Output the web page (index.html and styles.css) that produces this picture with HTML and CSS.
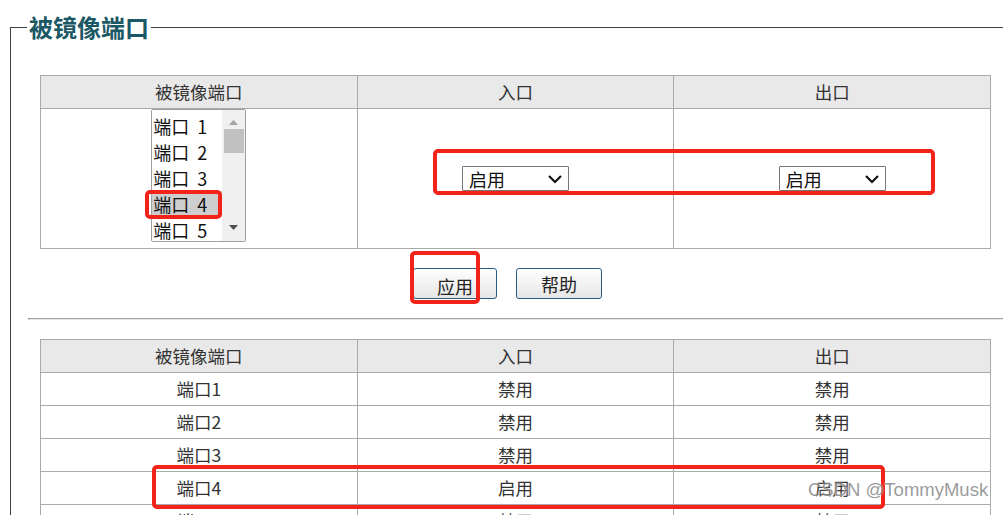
FILE: index.html
```html
<!DOCTYPE html>
<html lang="zh-CN">
<head>
  <meta charset="UTF-8" />
  <meta name="viewport" content="width=device-width, initial-scale=1.0" />
  <title>被镜像端口</title>
  <link rel="stylesheet" href="styles.css">
</head>
<body>
<fieldset class="panel">
  <legend>被镜像端口</legend>

  <table class="grid edit-grid">
    <tr><th>被镜像端口</th><th>入口</th><th>出口</th></tr>
    <tr class="edit-row">
      <td class="port-cell">
        <div class="listbox">
          <div class="options">
            <div class="option">端口 1</div>
            <div class="option">端口 2</div>
            <div class="option">端口 3</div>
            <div class="option selected">端口 4</div>
            <div class="option">端口 5</div>
          </div>
          <div class="scrollbar">
            <svg class="arrow" width="23" height="12" viewBox="0 0 23 12"><polygon points="7,9 16,9 11.5,4" fill="#a3a3a3"/></svg>
            <div class="thumb"></div>
            <svg class="arrow arrow-down" width="23" height="12" viewBox="0 0 23 12"><polygon points="7,3 16,3 11.5,8" fill="#505050"/></svg>
          </div>
        </div>
      </td>
      <td>
        <div class="dropdown"><span>启用</span>
          <svg width="16" height="10" viewBox="0 0 16 10"><polyline points="2,2 8,8 14,2" fill="none" stroke="#111" stroke-width="2.2"/></svg>
        </div>
      </td>
      <td>
        <div class="dropdown"><span>启用</span>
          <svg width="16" height="10" viewBox="0 0 16 10"><polyline points="2,2 8,8 14,2" fill="none" stroke="#111" stroke-width="2.2"/></svg>
        </div>
      </td>
    </tr>
  </table>

  <div class="actions">
    <button class="btn btn-apply">应用</button>
    <button class="btn btn-help">帮助</button>
  </div>

  <hr class="divider">

  <table class="grid list-grid">
    <tr><th>被镜像端口</th><th>入口</th><th>出口</th></tr>
    <tr><td>端口1</td><td>禁用</td><td>禁用</td></tr>
    <tr><td>端口2</td><td>禁用</td><td>禁用</td></tr>
    <tr><td>端口3</td><td>禁用</td><td>禁用</td></tr>
    <tr><td>端口4</td><td>启用</td><td>启用</td></tr>
    <tr><td>端口5</td><td>禁用</td><td>禁用</td></tr>
  </table>
</fieldset>

<!-- red annotation boxes drawn over the page -->
<div class="mark mark-option"></div>
<div class="mark mark-selects"></div>
<div class="mark mark-apply"></div>
<div class="mark mark-row"></div>

<div class="watermark">CSDN @TommyMusk</div>
</body>
</html>
```

FILE: styles.css
```css
body {
  margin: 0;
  background: #fff;
  font-family: "Noto Sans CJK SC", "Microsoft YaHei", sans-serif;
  color: #333;
  overflow: hidden;
  height: 515px;
}
.panel {
  margin: 11px 0 0 10px;
  padding: 0 0 40px 16px;
  width: 1100px;
  border: 1px solid #3c4247;
  min-inline-size: 0;
}
.panel legend {
  padding: 0 2px;
  font-size: 24px;
  line-height: 32px;
  font-weight: bold;
  color: #1b5865;
}
.grid {
  width: 951px;
  margin-left: 13px;
  border-collapse: collapse;
  table-layout: fixed;
  font-size: 17.5px;
}
.grid th,
.grid td {
  border: 1px solid #a9a9a9;
  text-align: center;
  padding: 0;
  height: 32px;
  line-height: 24px;
  font-weight: normal;
}
.grid th {
  background: #e9e9e9;
}
.edit-grid {
  margin-top: 32px;
}
.edit-row td {
  height: 139px;
  vertical-align: middle;
}
.edit-row td.port-cell {
  vertical-align: top;
}
.listbox {
  display: flex;
  width: 95px;
  height: 133px;
  margin: 0 auto;
  border: 1px solid #a0a0a0;
  border-radius: 2px;
  box-sizing: border-box;
  overflow: hidden;
  background: #fff;
  text-align: left;
  color: #111;
}
.options {
  width: 70px;
  padding-top: 3px;
}
.option {
  font-size: 18px;
  line-height: 26px;
  height: 26px;
  padding-left: 1px;
  word-spacing: 4px;
  white-space: nowrap;
}
.option.selected {
  background: #cecece;
}
.scrollbar {
  width: 23px;
  background: #f0f0f0;
  display: flex;
  flex-direction: column;
  align-items: center;
  padding-top: 6px;
}
.arrow {
  display: block;
}
.thumb {
  width: 20px;
  height: 24px;
  margin-top: 1px;
  background: #c1c1c1;
}
.arrow-down {
  margin-top: auto;
  margin-bottom: 7px;
}
.dropdown {
  display: flex;
  align-items: center;
  justify-content: space-between;
  width: 107px;
  height: 25px;
  margin: 0 auto;
  padding: 0 5px 0 6px;
  box-sizing: border-box;
  border: 1px solid #767676;
  border-radius: 1px;
  font-size: 18px;
  color: #111;
  text-align: left;
}
.actions {
  display: flex;
  gap: 19px;
  margin-top: 19px;
  padding-left: 386px;
}
.btn {
  height: 31px;
  padding: 0;
  border: 1px solid #2a5c88;
  border-radius: 3px;
  background: linear-gradient(#ffffff, #e6e6e6);
  font-family: inherit;
  font-size: 18px;
  color: #222;
  line-height: 24px;
}
.btn-apply {
  width: 84px;
  padding-top: 4px;
}
.btn-help {
  width: 86px;
}
.divider {
  margin: 19px 0 0 1px;
  height: 0;
  border: 0;
  border-top: 1px solid #a3a3a3;
  border-bottom: 1px solid #e6e6e6;
  border-left: 1px solid #a3a3a3;
}
.list-grid {
  margin-top: 19px;
}
.mark {
  position: absolute;
  box-sizing: border-box;
  border: 4px solid #f3231a;
  border-radius: 5px;
}
.mark-option {
  left: 145px;
  top: 190px;
  width: 77px;
  height: 29px;
}
.mark-selects {
  left: 433px;
  top: 149px;
  width: 502px;
  height: 46px;
}
.mark-apply {
  left: 410px;
  top: 251px;
  width: 70px;
  height: 53px;
}
.mark-row {
  left: 152px;
  top: 465px;
  width: 733px;
  height: 44px;
}
.watermark {
  position: absolute;
  left: 808px;
  top: 479px;
  font-family: "Liberation Sans", Arial, sans-serif;
  font-size: 18.5px;
  color: rgba(110, 110, 110, 0.7);
  text-shadow: 0 0 2px #fff;
}
```
